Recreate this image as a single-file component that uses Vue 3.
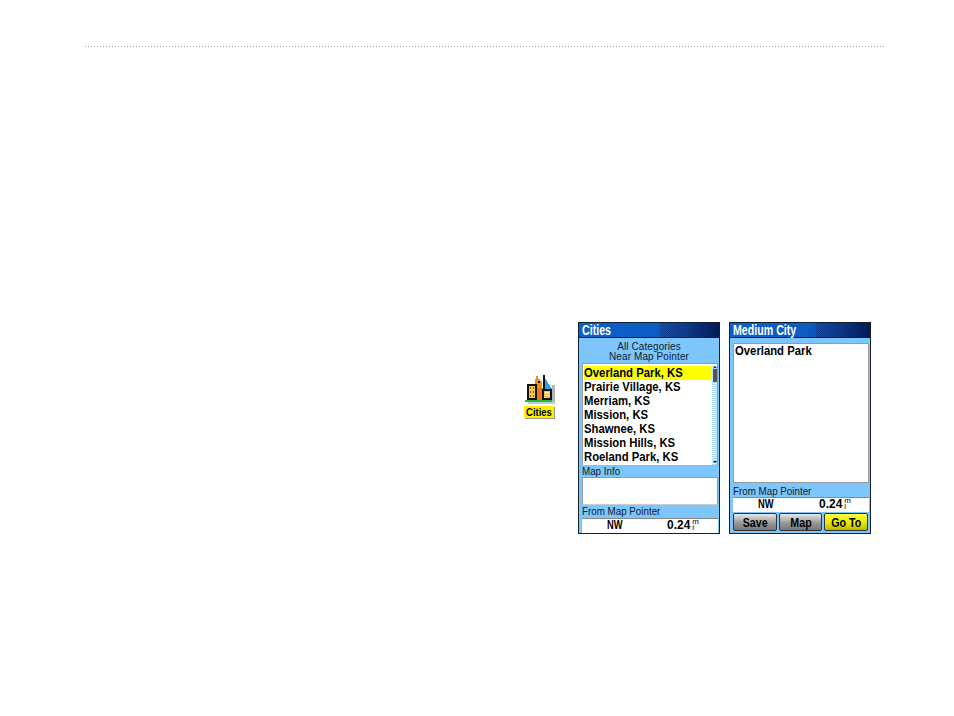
<template>
  <div class="page">
    <div class="rule"></div>
    <div class="content">
      <div class="cities-icon">
        <svg width="32" height="30" viewBox="0 0 32 30" shape-rendering="crispEdges">
          <!-- shadow -->
          <rect x="27" y="10" width="3" height="19" fill="#b4b4bc" />
          <rect x="3" y="27" width="27" height="2" fill="#c8c8d0" />
          <!-- blue roof behind -->
          <path d="M20 3l7 11v1h-7z" fill="#2ea0f0" />
          <!-- orange tower -->
          <path d="M11 1h2v3h2v2h2v7h-7V4h1z" fill="#f09018" />
          <rect x="13" y="6" width="2" height="2" fill="#111" />
          <!-- left block -->
          <rect x="2" y="9" width="10" height="16" fill="#111" />
          <rect x="4" y="11" width="6" height="12" fill="#fcc840" />
          <rect x="5" y="12" width="1" height="2" fill="#8a5a10" />
          <rect x="8" y="12" width="1" height="2" fill="#8a5a10" />
          <rect x="5" y="16" width="1" height="2" fill="#8a5a10" />
          <rect x="8" y="16" width="1" height="2" fill="#8a5a10" />
          <rect x="5" y="20" width="1" height="2" fill="#8a5a10" />
          <rect x="8" y="20" width="1" height="2" fill="#8a5a10" />
          <!-- middle -->
          <rect x="12" y="13" width="6" height="12" fill="#e87818" />
          <rect x="18" y="0" width="2" height="25" fill="#111" />
          <!-- right block -->
          <rect x="17" y="14" width="10" height="11" fill="#111" />
          <rect x="19" y="16" width="6" height="7" fill="#fcc840" />
          <rect x="20" y="17" width="4" height="1" fill="#fff" />
          <rect x="20" y="20" width="4" height="1" fill="#fff" />
          <!-- ground -->
          <rect x="0" y="25" width="27" height="2" fill="#18c040" />
        </svg>
        <div class="icon-label"><span>Cities</span></div>
      </div>

      <div class="device">
        <div class="titlebar"><span class="title-text">Cities</span><span class="dither"></span></div>
        <div class="subhead">
          <span class="thin">All Categories</span><br />
          <span class="thin">Near Map Pointer</span>
        </div>
        <div class="list">
          <div class="rows">
            <div v-for="(c, i) in cities" :key="c" class="row" :class="{ sel: i === 0 }"><span>{{ c }}</span></div>
          </div>
          <div class="scroll">
            <i class="arrow up"></i>
            <span class="thumb"></span>
            <i class="arrow down"></i>
          </div>
        </div>
        <div class="label"><span class="thin left">Map Info</span></div>
        <div class="info"></div>
        <div class="label lower"><span class="thin left">From Map Pointer</span></div>
        <div class="value">
          <span class="dir"><b>NW</b></span>
          <span class="num"><b>0.24</b></span>
          <small>m<br />i</small>
        </div>
      </div>

      <div class="device second">
        <div class="titlebar"><span class="title-text">Medium City</span><span class="dither"></span></div>
        <div class="detail"><span>Overland Park</span></div>
        <div class="label big"><span class="thin left">From Map Pointer</span></div>
        <div class="value">
          <span class="dir"><b>NW</b></span>
          <span class="num"><b>0.24</b></span>
          <small>m<br />i</small>
        </div>
        <div class="buttons">
          <button class="btn"><span>Save</span></button>
          <button class="btn"><span>Map</span></button>
          <button class="btn go"><span>Go To</span></button>
        </div>
      </div>
    </div>
  </div>
</template>

<script setup>
const cities = [
  'Overland Park, KS',
  'Prairie Village, KS',
  'Merriam, KS',
  'Mission, KS',
  'Shawnee, KS',
  'Mission Hills, KS',
  'Roeland Park, KS'
]
</script>

<style>
html, body { background: #fff; }
</style>

<style scoped>
* { box-sizing: border-box; }
.page { width: 954px; height: 716px; padding: 46px 83px 0 85px; font-family: "Liberation Sans", Arial, sans-serif; color: #000; overflow: hidden; }
.rule { height: 1px; width: 801px; background: repeating-linear-gradient(90deg, #a0a0a0 0 1px, #fff 1px 3px); }
.content { display: flex; justify-content: flex-end; align-items: flex-start; margin-top: 275px; }

.cities-icon { display: flex; flex-direction: column; align-items: flex-start; width: 32px; margin: 53px 21px 0 0; }
.cities-icon svg { display: block; }
.icon-label { margin: 1px 0 0 -1px; width: 30px; height: 12px; line-height: 12px; background: #ffee00; box-shadow: 1px 1px 0 #999; font-size: 11px; font-weight: 700; text-align: center; white-space: nowrap; }
.icon-label span { display: inline-block; transform: scaleX(.86); }

.device { width: 142px; height: 212px; border: 1px solid #14202e; background: #7cc6fc; display: flex; flex-direction: column; }
.device + .device { margin-left: 9px; }
.titlebar { display: flex; justify-content: space-between; flex: 0 0 15px; line-height: 14px; color: #fff; font-size: 14px; font-weight: 700; background: linear-gradient(90deg, #0c60cc 0%, #0c5cc4 55%, #0a3c94 78%, #04124c 100%); border-bottom: 1px solid #14202e; white-space: nowrap; }
.title-text { padding-left: 3px; transform: scaleX(.76); transform-origin: 3px 0; }
.dither { width: 42%; background: repeating-conic-gradient(#0a2a70 0 25%, transparent 0 50%) 0 0 / 2px 2px; opacity: .5; }

.thin { display: inline-block; vertical-align: top; font-size: 11px; line-height: 10px; color: #10202c; transform: scaleX(.89); white-space: nowrap; }
.thin.left { transform-origin: left; }
.subhead { flex: 0 0 25px; min-height: 0; padding-top: 4px; text-align: center; line-height: 10px; }
.subhead .thin { font-size: 10px; transform: none; letter-spacing: .1px; }

.list { margin: 0 1px 0 3px; flex: 0 0 102px; background: #fff; border: 1px solid #9a9a9a; border-bottom: 0; display: flex; padding: 2px 0 0 1px; }
.rows { flex: 1; }
.row { height: 14px; line-height: 13px; font-size: 13px; font-weight: 700; white-space: nowrap; }
.row span, .detail span { display: inline-block; transform: scaleX(.87); transform-origin: left; }
.row.sel { background: #ffff00; }
.scroll { flex: 0 0 5px; display: flex; flex-direction: column; align-items: center; background: repeating-linear-gradient(0deg, #a8d8f8 0 1px, #e6f4ff 1px 2px); }
.arrow { display: block; width: 0; height: 0; border-left: 2px solid transparent; border-right: 2px solid transparent; }
.arrow.up { border-bottom: 2px solid #333; }
.arrow.down { border-top: 2px solid #111; margin: auto 0 2px; }
.thumb { display: block; width: 4px; height: 13px; margin-top: 1px; background: #555; }

.label { flex: 0 0 12px; min-height: 0; padding: 1px 0 0 3px; line-height: 10px; }
.label.lower { flex-basis: 13px; }
.label.big { flex-basis: 14px; padding-top: 3px; }
.info { margin: 0 1px 0 3px; flex: 0 0 28px; background: #fff; border: 1px solid #9a9a9a; border-bottom-color: #ccc; }
.value { margin: 0 1px 0 3px; flex: 0 0 15px; padding-bottom: 2px; background: #fff; border-top: 1px solid #888; display: flex; align-items: center; font-size: 13px; line-height: 12px; }
.dir { flex: 0 0 66px; text-align: center; }
.dir b { display: inline-block; transform: scaleX(.72); }
.num { flex: 0 0 23px; margin-left: 19px; white-space: nowrap; }
.second .num { margin-left: 20px; }
.num b { display: inline-block; transform: scaleX(.92); transform-origin: left; }
.value small { font-size: 8px; line-height: 6px; }

.detail { margin: 5px 1px 0 3px; flex: 0 0 140px; background: #fff; border: 1px solid #9a9a9a; padding-left: 1px; font-size: 13px; font-weight: 700; line-height: 14px; white-space: nowrap; }
.buttons { display: flex; gap: 2px; margin: 1px 2px 0 3px; }
.btn { flex: 1; height: 18px; padding: 0; border: 1px solid #333; border-radius: 2px; background: linear-gradient(#e8e8e8, #999 55%, #777); font: 700 13px "Liberation Sans", Arial, sans-serif; color: #000; white-space: nowrap; }
.btn span { display: inline-block; transform: scaleX(.82); }
.btn.go { background: linear-gradient(#ffff40, #e8e800 55%, #b8b800); }
</style>
